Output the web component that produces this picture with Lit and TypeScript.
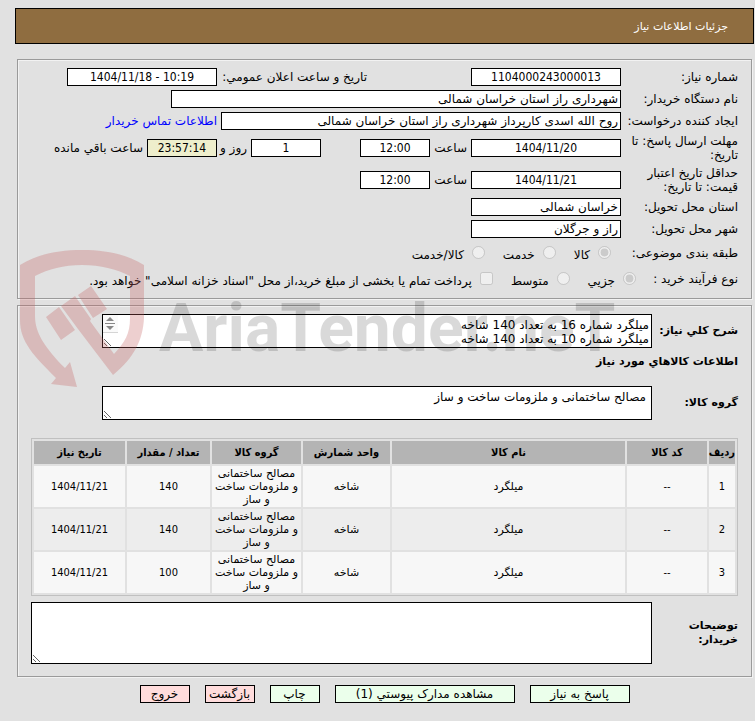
import { LitElement, html, css, svg } from "lit";
import { customElement } from "lit/decorators.js";

interface Item {
  code: string;
  name: string;
  unit: string;
  group: string;
  amount: string;
  date: string;
}

const GROUP = "مصالح ساختمانی و ملزومات ساخت و ساز";

const ITEMS: Item[] = ["140", "140", "100"].map((amount) => ({
  code: "--",
  name: "میلگرد",
  unit: "شاخه",
  group: GROUP,
  amount,
  date: "1404/11/21",
}));

@customElement("tender-watermark")
export class TenderWatermark extends LitElement {
  static styles = css`
    :host {
      position: absolute;
      top: 245px;
      left: 15px;
      pointer-events: none;
    }
    .mark {
      display: block;
    }
    .shield {
      fill: rgb(195, 95, 97);
      fill-opacity: 0.3;
    }
    .name {
      font-family: Roboto, sans-serif;
      font-weight: 700;
      font-size: 66px;
      fill: #000;
      fill-opacity: 0.15;
      direction: ltr;
    }
  `;

  render() {
    return html`<svg class="mark" width="620" height="150" viewBox="15 245 620 150" aria-hidden="true">
      ${svg`<path class="shield" d="M20 265C38 254 58 250 82 250S126 254 144 265V318C143 340 134 358 113 375L78 329L61 306L75 296L91 319L90 321L114 354C125 342 130 334 130 318V276C116 269 101 265 82 265S49 269 35 276V316C35 332 44 347 65 368L70 362L77 387L51 384L56 378C34 356 20 342 20 320Z"/>
      <path class="shield" d="M46 317L59 307L75 330L61 340ZM78 295L91 286L107 309L93 318Z"/>`}
      <text class="name" x="159" y="351">AriaTender.neT</text>
    </svg>`;
  }
}

@customElement("app-root")
export class AppRoot extends LitElement {
  static styles = css`
    :host {
      display: block;
      position: relative;
      box-sizing: border-box;
      min-height: 100vh;
      padding: 8px 1px 18px 15px;
      background: #e1e1e1;
      color: #000;
      direction: rtl;
      font-family: "DejaVu Sans", sans-serif;
      font-size: 12px;
      line-height: 14px;
    }
    * {
      box-sizing: border-box;
    }
    .title {
      display: flex;
      align-items: center;
      height: 36px;
      margin: 0 0 15px;
      padding: 2px 25px 0;
      border: 1px solid #000;
      background: #8f6d40;
      color: #fff;
      font-size: 11px;
      font-weight: 400;
    }
    .panel {
      margin: 0 2px 6px;
      border: 1px solid #9a9a9a;
      box-shadow: inset 1px 1px #f2f2f2, 1px 1px #f2f2f2;
    }
    .facts {
      display: flex;
      flex-direction: column;
      gap: 4px;
      padding: 8px 13px;
    }
    .row {
      display: flex;
      align-items: center;
      gap: 4px;
      min-height: 18px;
      white-space: nowrap;
    }
    .caption {
      flex: none;
      width: 113px;
    }
    .tall {
      min-height: 28px;
    }
    .options {
      min-height: 22px;
    }
    .field {
      display: block;
      height: 18px;
      min-width: 0;
      margin: 0;
      padding: 0 2px;
      border: 1px solid #000;
      border-radius: 0;
      background: #fff;
      color: #000;
      font: inherit;
      font-size: 12px;
      outline: 0;
    }
    .center {
      text-align: center;
      direction: ltr;
      font-family: "DejaVu Sans Condensed", "DejaVu Sans", sans-serif;
    }
    .short {
      width: 70px;
    }
    .mid {
      width: 150px;
    }
    .long {
      width: 400px;
    }
    .wide {
      width: 450px;
    }
    .left {
      background: #eeeecc;
    }
    .announce {
      width: 146px;
      margin-right: 100px;
    }
    .hour {
      width: 33px;
    }
    .days {
      margin-right: 35px;
    }
    .and {
      width: 26px;
    }
    .link {
      color: #00f;
      text-decoration: none;
    }
    .option {
      display: flex;
      align-items: center;
      gap: 8px;
      padding-top: 3px;
      margin-right: 10px;
      margin-left: 4px;
    }
    .tick {
      width: 13px;
      height: 13px;
      margin: 0 0 4px;
    }
    .process {
      width: 98px;
      margin-left: -10px;
    }
    .details {
      padding: 8px 13px 12px;
    }
    .block {
      display: flex;
      align-items: center;
      gap: 4px;
      font-size: 11px;
      font-weight: 700;
    }
    .name {
      flex: none;
      width: 82px;
    }
    .holder {
      display: block;
      position: relative;
      flex: 0 1 550px;
    }
    .grow {
      flex: 1;
    }
    .area {
      display: block;
      width: 100%;
      height: 34px;
      margin: 0;
      padding: 3px 2px;
      overflow: hidden;
      border: 1px solid #000;
      background: #fff;
      color: #000;
      font: inherit;
      font-size: 12px;
      font-weight: 400;
      line-height: 14px;
      outline: 0;
      resize: both;
    }
    .roomy {
      padding: 3px 5px;
    }
    .notes {
      height: 62px;
    }
    .scroller {
      position: absolute;
      top: 1px;
      left: 1px;
    }
    .subtitle {
      margin: 7px 0 17px;
      font-size: 11px;
      font-weight: 700;
    }
    .items {
      width: 100%;
      margin: 18px 0 6px;
      border: 1px solid #c0c0c0;
      border-collapse: separate;
      border-spacing: 2px;
      table-layout: fixed;
      font-size: 11px;
      line-height: 13px;
      text-align: center;
    }
    .items th {
      height: 23px;
      padding: 0;
      background: #b4b4b4;
      font-family: "DejaVu Sans Condensed", "DejaVu Sans", sans-serif;
      font-size: 11px;
      white-space: nowrap;
    }
    .items td {
      height: 41px;
      padding: 1px 2px;
      background: #f7f7f7;
    }
    .items .figure {
      font-family: "DejaVu Sans Condensed", "DejaVu Sans", sans-serif;
    }
    .items tbody tr:nth-child(even) td {
      background: #ededed;
    }
    .c-row {
      width: 26px;
    }
    .c-code {
      width: 80px;
    }
    .c-unit {
      width: 87px;
    }
    .c-group {
      width: 89px;
    }
    .c-amount {
      width: 83px;
    }
    .c-date {
      width: 91px;
    }
    .actions {
      display: flex;
      justify-content: center;
      gap: 15px;
      margin-top: 8px;
    }
    .button {
      width: 50px;
      height: 18px;
      padding: 0;
      border: 1px solid #000;
      background: #ebffeb;
      color: #000;
      font: inherit;
      font-size: 12px;
      line-height: 16px;
      white-space: nowrap;
    }
    .reply {
      width: 100px;
    }
    .attachments {
      width: 180px;
    }
    .away {
      background: #ffdcdc;
    }
  `;

  private choice(type: string, group: string, text: string, checked = false) {
    return html`<label class="option"
      ><input class="tick" type=${type} name=${group} ?checked=${checked} disabled />${text}</label
    >`;
  }

  render() {
    return html`
      <h1 class="title">جزئیات اطلاعات نیاز</h1>
      <section class="panel facts">
        <div class="row">
          <label class="caption" for="number">شماره نیاز:</label>
          <input class="field mid center" id="number" readonly value="1104000243000013" />
          <label class="announce" for="announced">تاریخ و ساعت اعلان عمومي:</label>
          <input class="field mid center" id="announced" readonly value="1404/11/18 - 10:19" />
        </div>
        <div class="row">
          <label class="caption" for="buyer">نام دستگاه خریدار:</label>
          <input class="field wide" id="buyer" readonly value="شهرداری راز استان خراسان شمالی" />
        </div>
        <div class="row">
          <label class="caption" for="creator">ایجاد کننده درخواست:</label>
          <input class="field long" id="creator" readonly
            value="روح الله اسدی کارپرداز شهرداری راز استان خراسان شمالی" />
          <a class="link" href="#contact">اطلاعات تماس خریدار</a>
        </div>
        <div class="row tall">
          <label class="caption" for="deadline">مهلت ارسال پاسخ: تا<br />تاریخ:</label>
          <input class="field mid center" id="deadline" readonly value="1404/11/20" />
          <label class="hour" for="deadline-hour">ساعت</label>
          <input class="field short center" id="deadline-hour" readonly value="12:00" />
          <input class="field short center days" id="days" readonly value="1" />
          <label class="and" for="days">روز و</label>
          <input class="field short center left" id="time-left" readonly value="23:57:14" />
          <label for="time-left">ساعت باقي مانده</label>
        </div>
        <div class="row tall">
          <label class="caption" for="validity">حداقل تاریخ اعتبار<br />قیمت: تا تاریخ:</label>
          <input class="field mid center" id="validity" readonly value="1404/11/21" />
          <label class="hour" for="validity-hour">ساعت</label>
          <input class="field short center" id="validity-hour" readonly value="12:00" />
        </div>
        <div class="row">
          <label class="caption" for="province">استان محل تحویل:</label>
          <input class="field mid" id="province" readonly value="خراسان شمالی" />
        </div>
        <div class="row">
          <label class="caption" for="city">شهر محل تحویل:</label>
          <input class="field mid" id="city" readonly value="راز و جرگلان" />
        </div>
        <div class="row options">
          <span class="caption">طبقه بندی موضوعی:</span>
          ${this.choice("radio", "subject", "کالا", true)} ${this.choice("radio", "subject", "خدمت")}
          ${this.choice("radio", "subject", "کالا/خدمت")}
        </div>
        <div class="row options">
          <span class="caption process">نوع فرآیند خرید :</span>
          ${this.choice("radio", "process", "جزیي", true)} ${this.choice("radio", "process", "متوسط")}
          ${this.choice(
            "checkbox",
            "treasury",
            'پرداخت تمام یا بخشی از مبلغ خرید،از محل "اسناد خزانه اسلامی" خواهد بود.'
          )}
        </div>
      </section>
      <section class="panel details">
        <label class="block">
          <span class="name">شرح کلي نیاز:</span>
          <span class="holder">
            <textarea class="area" readonly .value=${"میلگرد شماره 16 به تعداد 140 شاخه\nمیلگرد شماره 10 به تعداد 140 شاخه"}></textarea>
            <svg class="scroller" width="15" height="18" aria-hidden="true">
              <path fill="#fafafa" d="M0 0h15v18H0z" />
              <path fill="#888" d="M7 2l4 4H3zM2 8h10v1H2zM3 11h8l-4 4z" />
              <path fill="#d5d5d5" d="M0 17h15v1H0z" />
            </svg>
          </span>
        </label>
        <h2 class="subtitle">اطلاعات کالاهاي مورد نیاز</h2>
        <label class="block">
          <span class="name">گروه کالا:</span>
          <span class="holder"><textarea class="area roomy" readonly .value=${GROUP}></textarea></span>
        </label>
        <table class="items">
          <thead>
            <tr>
              <th class="c-row">ردیف</th>
              <th class="c-code">کد کالا</th>
              <th>نام کالا</th>
              <th class="c-unit">واحد شمارش</th>
              <th class="c-group">گروه کالا</th>
              <th class="c-amount">تعداد / مقدار</th>
              <th class="c-date">تاریخ نیاز</th>
            </tr>
          </thead>
          <tbody>
            ${ITEMS.map(
              (item, i) => html`<tr>
                <td class="figure">${i + 1}</td>
                <td class="figure">${item.code}</td>
                <td>${item.name}</td>
                <td>${item.unit}</td>
                <td>${item.group}</td>
                <td class="figure">${item.amount}</td>
                <td class="figure">${item.date}</td>
              </tr>`
            )}
          </tbody>
        </table>
        <label class="block">
          <span class="name">توضیحات<br />خریدار:</span>
          <span class="holder grow"><textarea class="area notes" readonly></textarea></span>
        </label>
      </section>
      <div class="actions">
        <button class="button reply">پاسخ به نیاز</button>
        <button class="button attachments">مشاهده مدارک پیوستي (1)</button>
        <button class="button">چاپ</button>
        <button class="button away">بازگشت</button>
        <button class="button away">خروج</button>
      </div>
      <tender-watermark></tender-watermark>
    `;
  }
}
